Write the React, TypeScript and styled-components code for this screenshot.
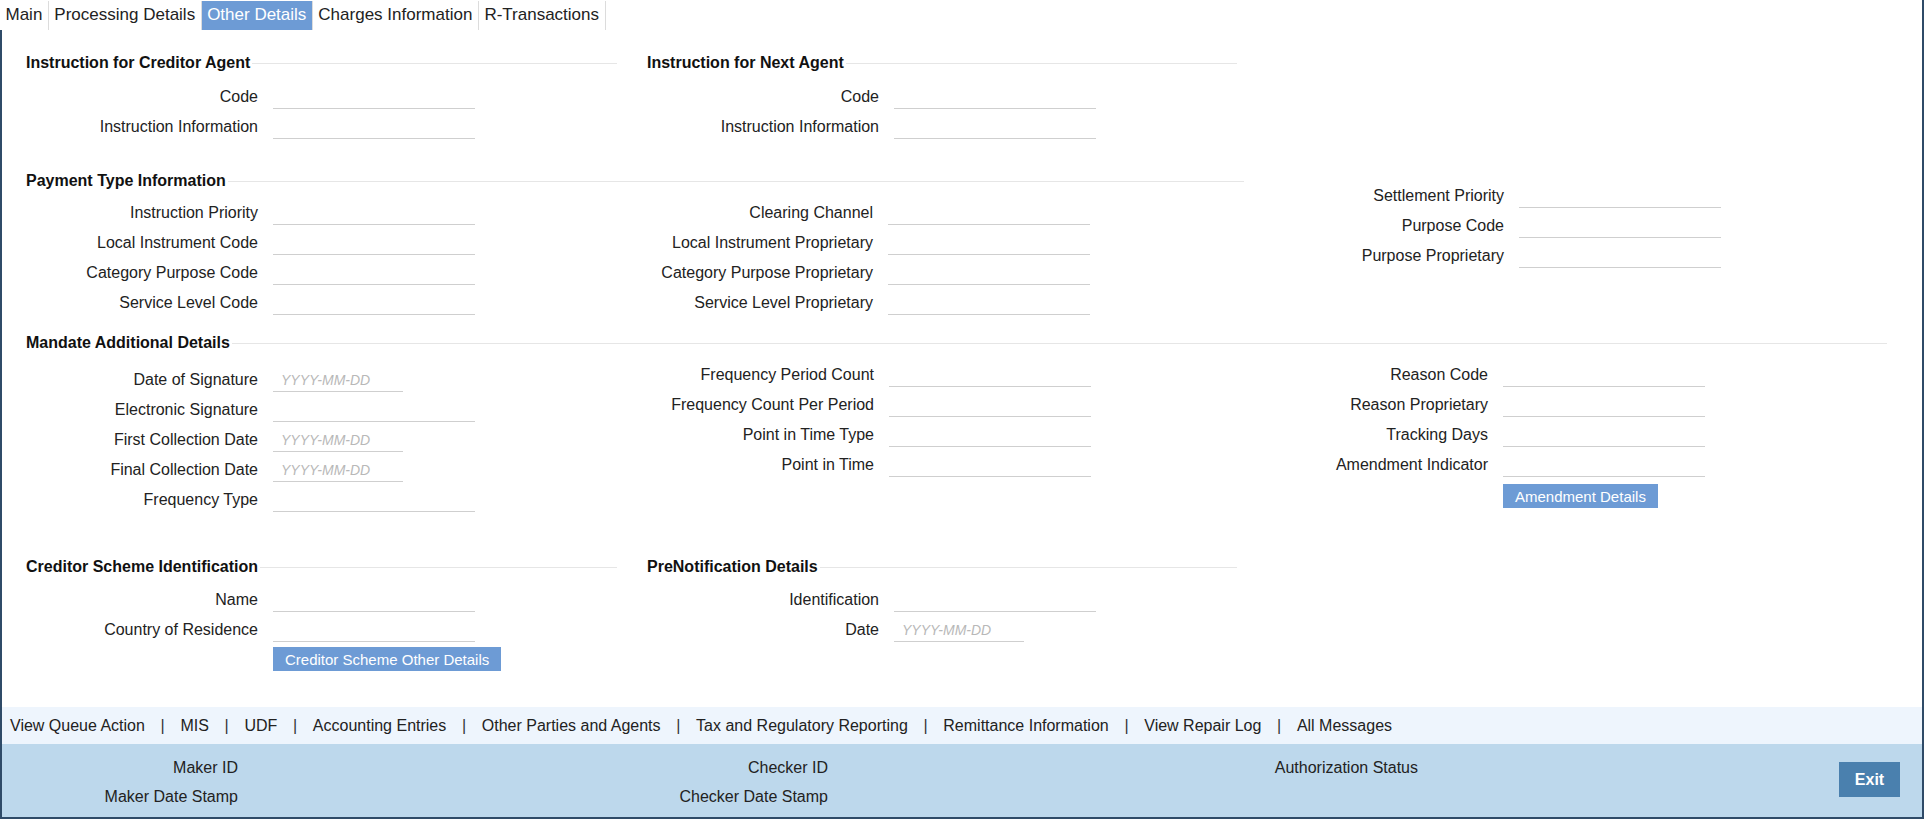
import React from 'react';
import styled, { createGlobalStyle } from 'styled-components';

const GlobalStyle = createGlobalStyle`
  html, body {
    margin: 0;
    padding: 0;
    background: #ffffff;
  }
  body {
    font-family: "Liberation Sans", Arial, sans-serif;
    font-size: 16px;
    color: #222;
  }
`;

const Page = styled.div`
  width: 1924px;
  height: 819px;
  box-sizing: border-box;
  border-right: 2px solid #2f4b68;
  display: flex;
  flex-direction: column;
  overflow: hidden;
`;

const TabBar = styled.div`
  height: 30px;
  display: flex;
  align-items: stretch;
  padding-top: 1px;
  box-sizing: border-box;
`;

const Tab = styled.div<{ $active?: boolean }>`
  display: flex;
  align-items: center;
  padding: 0 5.5px 1px;
  font-size: 17px;
  color: ${(p) => (p.$active ? '#ffffff' : '#222')};
  background: ${(p) => (p.$active ? '#6d9bd5' : 'transparent')};
  border-right: 1px solid #dcdcdc;
`;

const Panel = styled.div`
  flex: 1;
  display: flex;
  flex-direction: column;
  border-left: 2px solid #2f4b68;
  border-bottom: 2px solid #2f4b68;
`;

const Content = styled.div`
  height: 677px;
  box-sizing: border-box;
  padding: 18px 0 0 24px;
`;

const Section = styled.div<{ $top?: number }>`
  display: flex;
  align-items: flex-start;
  margin-top: ${(p) => p.$top ?? 0}px;
`;

const Block = styled.div<{ $width?: number; $pad?: number; $gap?: number }>`
  width: ${(p) => (p.$width ? `${p.$width}px` : 'auto')};
  padding-top: ${(p) => p.$pad ?? 0}px;
  margin-left: ${(p) => p.$gap ?? 0}px;
  display: flex;
  flex-direction: column;
`;

const Heading = styled.div<{ $below?: number }>`
  height: 30px;
  display: flex;
  align-items: center;
  margin-bottom: ${(p) => p.$below ?? 2}px;
  font-weight: bold;
  color: #111;

  &::after {
    content: '';
    flex: 1;
    height: 1px;
    margin-left: 2px;
    background: #e6e6e6;
  }
`;

const Columns = styled.div`
  display: flex;
  align-items: flex-start;
`;

const Column = styled.div<{ $width?: number; $pad?: number }>`
  width: ${(p) => (p.$width ? `${p.$width}px` : 'auto')};
  padding-top: ${(p) => p.$pad ?? 0}px;
  display: flex;
  flex-direction: column;
`;

const Row = styled.div`
  height: 30px;
  display: flex;
  align-items: center;
  gap: 15px;
`;

const Label = styled.div`
  width: 232px;
  text-align: right;
  white-space: nowrap;
  color: #222;
`;

const Input = styled.div<{ $date?: boolean }>`
  width: ${(p) => (p.$date ? 130 : 202)}px;
  height: 24px;
  box-sizing: border-box;
  border-bottom: 1px solid #cfcfcf;
  padding-left: 8px;
  display: flex;
  align-items: center;
  font-size: 14px;
  font-style: italic;
  color: #b8b8b8;
`;

const ActionButton = styled.button<{ $top?: number }>`
  align-self: flex-start;
  margin: ${(p) => p.$top ?? 3}px 0 0 247px;
  height: 24px;
  padding: 0 12px;
  border: none;
  background: #6d9bd5;
  color: #ffffff;
  font-family: "Liberation Sans", Arial, sans-serif;
  font-size: 15px;
`;

const LinkBar = styled.div`
  height: 37px;
  background: #eef5fd;
  display: flex;
  align-items: center;
  padding-left: 8px;
  color: #222;
  white-space: nowrap;
`;

const LinkSep = styled.span`
  padding: 0 15.7px;
  color: #333;
`;

const AuditBar = styled.div`
  flex: 1;
  background: #bdd8ec;
  display: flex;
  align-items: center;
  padding-right: 22px;
`;

const AuditGrid = styled.div`
  flex: 1;
  align-self: flex-start;
  padding-top: 9px;
  display: grid;
  grid-template-columns: repeat(3, 590px);
  grid-auto-rows: 29px;
  align-items: center;
`;

const AuditLabel = styled.div`
  width: 236px;
  text-align: right;
  white-space: nowrap;
  color: #222;
`;

const ExitButton = styled.button`
  width: 61px;
  height: 35px;
  margin-bottom: 2px;
  border: none;
  background: #4a80ae;
  color: #ffffff;
  font-family: "Liberation Sans", Arial, sans-serif;
  font-weight: bold;
  font-size: 16px;
`;

type FieldDef = { label: string; date?: boolean };

const Field: React.FC<FieldDef> = ({ label, date }) => (
  <Row>
    <Label>{label}</Label>
    <Input $date={date}>{date ? 'YYYY-MM-DD' : ''}</Input>
  </Row>
);

const FieldList: React.FC<{ fields: FieldDef[] }> = ({ fields }) => (
  <>
    {fields.map((f) => (
      <Field key={f.label} {...f} />
    ))}
  </>
);

const tabs = ['Main', 'Processing Details', 'Other Details', 'Charges Information', 'R-Transactions'];

const links = [
  'View Queue Action',
  'MIS',
  'UDF',
  'Accounting Entries',
  'Other Parties and Agents',
  'Tax and Regulatory Reporting',
  'Remittance Information',
  'View Repair Log',
  'All Messages',
];

export default function App() {
  return (
    <>
      <GlobalStyle />
      <Page>
        <TabBar>
          {tabs.map((t) => (
            <Tab key={t} $active={t === 'Other Details'}>
              {t}
            </Tab>
          ))}
        </TabBar>
        <Panel>
          <Content>
            <Section>
              <Block $width={591}>
                <Heading $below={4}>Instruction for Creditor Agent</Heading>
                <FieldList fields={[{ label: 'Code' }, { label: 'Instruction Information' }]} />
              </Block>
              <Block $width={590} $gap={30}>
                <Heading $below={4}>Instruction for Next Agent</Heading>
                <FieldList fields={[{ label: 'Code' }, { label: 'Instruction Information' }]} />
              </Block>
            </Section>

            <Section $top={24}>
              <Block $width={1218}>
                <Heading>Payment Type Information</Heading>
                <Columns>
                  <Column $width={615}>
                    <FieldList
                      fields={[
                        { label: 'Instruction Priority' },
                        { label: 'Local Instrument Code' },
                        { label: 'Category Purpose Code' },
                        { label: 'Service Level Code' },
                      ]}
                    />
                  </Column>
                  <Column>
                    <FieldList
                      fields={[
                        { label: 'Clearing Channel' },
                        { label: 'Local Instrument Proprietary' },
                        { label: 'Category Purpose Proprietary' },
                        { label: 'Service Level Proprietary' },
                      ]}
                    />
                  </Column>
                </Columns>
              </Block>
              <Block $gap={28} $pad={15}>
                <FieldList
                  fields={[
                    { label: 'Settlement Priority' },
                    { label: 'Purpose Code' },
                    { label: 'Purpose Proprietary' },
                  ]}
                />
              </Block>
            </Section>

            <Section $top={10}>
              <Block $width={1861}>
                <Heading>Mandate Additional Details</Heading>
                <Columns>
                  <Column $width={616} $pad={5}>
                    <FieldList
                      fields={[
                        { label: 'Date of Signature', date: true },
                        { label: 'Electronic Signature' },
                        { label: 'First Collection Date', date: true },
                        { label: 'Final Collection Date', date: true },
                        { label: 'Frequency Type' },
                      ]}
                    />
                  </Column>
                  <Column $width={614}>
                    <FieldList
                      fields={[
                        { label: 'Frequency Period Count' },
                        { label: 'Frequency Count Per Period' },
                        { label: 'Point in Time Type' },
                        { label: 'Point in Time' },
                      ]}
                    />
                  </Column>
                  <Column>
                    <FieldList
                      fields={[
                        { label: 'Reason Code' },
                        { label: 'Reason Proprietary' },
                        { label: 'Tracking Days' },
                        { label: 'Amendment Indicator' },
                      ]}
                    />
                    <ActionButton $top={4}>Amendment Details</ActionButton>
                  </Column>
                </Columns>
              </Block>
            </Section>

            <Section $top={37}>
              <Block $width={591}>
                <Heading $below={3}>Creditor Scheme Identification</Heading>
                <FieldList fields={[{ label: 'Name' }, { label: 'Country of Residence' }]} />
                <ActionButton $top={2}>Creditor Scheme Other Details</ActionButton>
              </Block>
              <Block $width={590} $gap={30}>
                <Heading $below={3}>PreNotification Details</Heading>
                <FieldList fields={[{ label: 'Identification' }, { label: 'Date', date: true }]} />
              </Block>
            </Section>
          </Content>

          <LinkBar>
            {links.map((l, ix) => (
              <React.Fragment key={l}>
                {ix > 0 && <LinkSep>|</LinkSep>}
                <span>{l}</span>
              </React.Fragment>
            ))}
          </LinkBar>

          <AuditBar>
            <AuditGrid>
              <AuditLabel>Maker ID</AuditLabel>
              <AuditLabel>Checker ID</AuditLabel>
              <AuditLabel>Authorization Status</AuditLabel>
              <AuditLabel>Maker Date Stamp</AuditLabel>
              <AuditLabel>Checker Date Stamp</AuditLabel>
            </AuditGrid>
            <ExitButton>Exit</ExitButton>
          </AuditBar>
        </Panel>
      </Page>
    </>
  );
}
